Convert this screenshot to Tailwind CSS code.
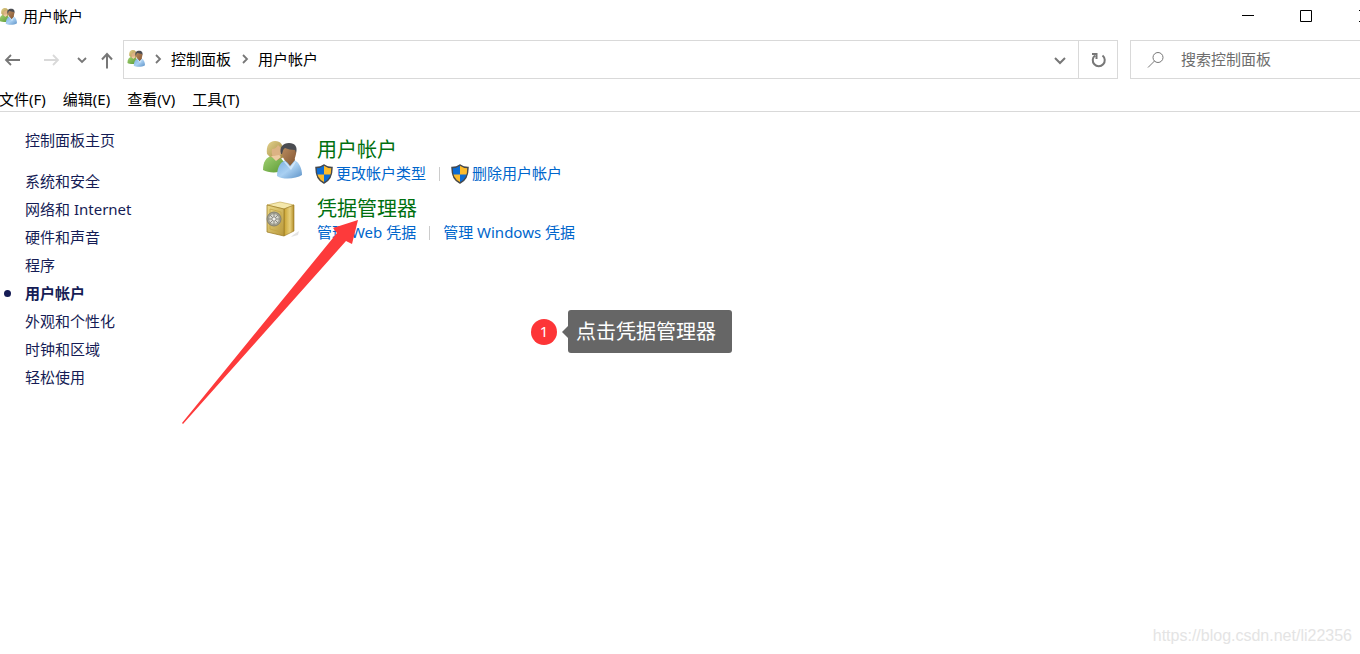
<!DOCTYPE html>
<html lang="zh-CN">
<head>
    <meta charset="utf-8">
    <meta name="viewport" content="width=device-width, initial-scale=1.0">
    <title>用户帐户</title>
    <script src="https://cdn.jsdelivr.net/npm/@tailwindcss/browser@4"></script>
</head>
<body class="relative min-h-screen overflow-x-hidden bg-white font-['Noto_Sans','Noto_Sans_CJK_SC',sans-serif] text-[15px] text-black">

<!-- shared icons -->
<svg class="absolute size-0" aria-hidden="true">
    <defs>
        <linearGradient id="green" x1="0" y1="0" x2="1" y2="1"><stop offset="0" stop-color="#a3d273"/><stop offset="1" stop-color="#5b9a35"/></linearGradient>
        <linearGradient id="blue" x1="0" y1="0" x2="1" y2="1"><stop offset="0" stop-color="#79aee0"/><stop offset=".5" stop-color="#a9d0f2"/><stop offset="1" stop-color="#5c91c6"/></linearGradient>
        <linearGradient id="hair" x1="0" y1="0" x2="1" y2="1"><stop offset="0" stop-color="#e3d28c"/><stop offset="1" stop-color="#9c823c"/></linearGradient>
        <linearGradient id="skin" x1="0" y1="0" x2="1" y2="1"><stop offset="0" stop-color="#bd8f62"/><stop offset="1" stop-color="#865935"/></linearGradient>
        <linearGradient id="gold" x1="0" y1="0" x2="1" y2="1"><stop offset="0" stop-color="#eddb8a"/><stop offset="1" stop-color="#b8973a"/></linearGradient>
        <linearGradient id="side" x1="0" y1="0" x2="1" y2="0"><stop offset="0" stop-color="#c9a22f"/><stop offset=".6" stop-color="#e6cf7c"/><stop offset="1" stop-color="#b38d28"/></linearGradient>
    </defs>
    <symbol id="users" viewBox="0 0 40 40">
        <path d="M1 31C1 23 4 18 10 17l8 1 4 5-1 9C15 34 6 34 1 31z" fill="url(#green)"/>
        <path d="M5 15C4 7 7 2 13 2c6 0 8 4 8 9l1 7-6 3-4-2-4-1z" fill="url(#hair)"/>
        <path d="M10 10c3 0 5-2 6-4 3 2 4 5 3 9-1 3-3 5-5 5-3 0-5-5-4-10z" fill="#dcb284"/>
        <path d="M9 17l5 5 5-4-2-2-5 1z" fill="#edcba2"/>
        <path d="M15 37c0-8 3-14 9-16l8 0c5 2 8 8 8 15-6 4-19 5-25 1z" fill="url(#blue)"/>
        <path d="M23 20l5 7 5-6-1-3-8-1z" fill="#8e6039"/>
        <path d="M20 14c0-5 3-8 8-8 4 0 7 4 6 9-1 5-3 9-6 9-4 0-8-5-8-10z" fill="url(#skin)"/>
        <path d="M19 15c-2-7 2-11 8-11 6 0 9 4 7 10l-1-3c-4 0-7-1-10-2-2 1-2 3-3 6z" fill="#4b4c51"/>
        <path d="M23 22l5 6 5-6 1 1-5 8-7-8z" fill="#cfe5f8"/>
    </symbol>
    <symbol id="safe" viewBox="0 0 40 40">
        <path d="M31 34l6-4-1 4-7 2z" fill="#e3e3e3"/>
        <path d="M5 4l13-3 14 3-10 4z" fill="#f4e8ac" stroke="#c0a248" stroke-width=".6"/>
        <path d="M22 8l10-4v26l-10 5z" fill="url(#side)" stroke="#96741e" stroke-width=".6"/>
        <path d="M5 4l17 4v27L5 31z" fill="url(#gold)" stroke="#9f802b" stroke-width=".8"/>
        <path d="M8 8l11 3v20L8 28z" fill="none" stroke="#c3a548" stroke-width=".8"/>
        <circle cx="12" cy="18" r="7" fill="#a3a293" stroke="#77766d" stroke-width=".8"/>
        <circle cx="12" cy="18" r="4.800" fill="#d9d9d1"/>
        <path d="M12 12v12M6 18h12M8 14l8 8M16 14l-8 8" stroke="#8b8a80"/>
        <circle cx="12" cy="18" r="2" fill="#f1f1ec" stroke="#77766d" stroke-width=".6"/>
    </symbol>
    <symbol id="shield" viewBox="0 0 18 20">
        <path d="M9 1C7 2.600 4 3.500 1 3.500 1 11 2.500 16 9 19c6.500-3 8-8 8-15.500C14 3.500 11 2.600 9 1z" fill="#0c6cd4"/>
        <path d="M9 1v9.500h7.500C17 8 17 6 17 3.500 14 3.500 11 2.600 9 1zM1.500 10.500H9V19c-5-2-7-5-7.500-8.500z" fill="#fdbc2c"/>
        <path d="M9 1C7 2.600 4 3.500 1 3.500 1 11 2.500 16 9 19c6.500-3 8-8 8-15.500C14 3.500 11 2.600 9 1z" fill="none" stroke="#45484d" stroke-width="1.500"/>
    </symbol>
</svg>

<!-- title bar -->
<header class="flex h-8 items-center">
    <svg class="-ml-px size-[18px]"><use href="#users"/></svg>
    <h1 class="ml-1.5 flex-1">用户帐户</h1>
    <button class="flex h-8 w-[58px] items-center justify-center" aria-label="最小化">
        <svg class="size-3" viewBox="0 0 12 12"><path d="M0 5.500h12" stroke="#000"/></svg>
    </button>
    <button class="flex h-8 w-[58px] items-center justify-center" aria-label="最大化">
        <svg class="size-3" viewBox="0 0 12 12"><path d="M.5.5h11v11H.5z" fill="none" stroke="#000"/></svg>
    </button>
    <button class="flex h-8 w-[25px] items-center overflow-hidden pl-6" aria-label="关闭">
        <svg class="size-3 shrink-0" viewBox="0 0 12 12"><path d="M0 0l12 12M12 0L0 12" stroke="#000"/></svg>
    </button>
</header>

<!-- navigation -->
<nav class="flex h-[55px] items-start pt-2">
    <div class="flex h-[39px] w-[123px] shrink-0 items-center text-[#777]">
        <button class="ml-1" aria-label="后退">
            <svg class="size-[18px]" viewBox="0 0 18 18" fill="none" stroke="currentColor" stroke-width="1.800"><path d="M16 9H2M7 4L2 9l5 5"/></svg>
        </button>
        <button class="ml-5 text-[#d9d9d9]" aria-label="前进">
            <svg class="size-[18px]" viewBox="0 0 18 18" fill="none" stroke="currentColor" stroke-width="1.800"><path d="M2 9h14M11 4l5 5-5 5"/></svg>
        </button>
        <button class="ml-4" aria-label="最近浏览的位置">
            <svg class="size-3" viewBox="0 0 12 12" fill="none" stroke="currentColor" stroke-width="1.800"><path d="M2 4l4 4 4-4"/></svg>
        </button>
        <button class="ml-2.5" aria-label="上移">
            <svg class="size-[18px]" viewBox="0 0 18 18" fill="none" stroke="currentColor" stroke-width="2"><path d="M9 17.500V3M4 8.500L9 3l5 5.500"/></svg>
        </button>
    </div>
    <div class="flex h-[39px] flex-1 items-center border border-[#d9d9d9]">
        <svg class="mb-1 ml-[3px] size-[18px]"><use href="#users"/></svg>
        <svg class="ml-[7px] size-3 text-[#777]" viewBox="0 0 12 12" fill="none" stroke="currentColor" stroke-width="1.800"><path d="M4 1l4 4-4 4"/></svg>
        <a href="#" class="ml-[7px]">控制面板</a>
        <svg class="ml-2 size-3 text-[#777]" viewBox="0 0 12 12" fill="none" stroke="currentColor" stroke-width="1.800"><path d="M4 1l4 4-4 4"/></svg>
        <a href="#" class="ml-[7px] flex-1">用户帐户</a>
        <button class="flex h-full w-9 items-center justify-center text-[#777]" aria-label="以前的位置">
            <svg class="size-3" viewBox="0 0 12 12" fill="none" stroke="currentColor" stroke-width="2"><path d="M1 4l5 5 5-5"/></svg>
        </button>
        <button class="flex h-full w-[39px] items-center justify-center border-l border-[#d9d9d9] text-[#777]" aria-label="刷新">
            <svg class="size-4" viewBox="0 0 16 16" fill="none" stroke="currentColor" stroke-width="2"><path d="M5 3.500A6 6 0 1 0 12.500 3.500M2 2h4.500v5"/></svg>
        </button>
    </div>
    <label class="ml-3 flex h-[39px] w-[230px] items-center border border-r-0 border-[#d9d9d9] pl-4">
        <svg class="size-[18px] shrink-0 text-[#777]" viewBox="0 0 18 18" fill="none" stroke="currentColor"><circle cx="11" cy="6.500" r="5"/><path d="M7.500 10L1 16.500"/></svg>
        <input type="text" class="ml-4 min-w-0 flex-1 placeholder:text-[#6d6d6d] outline-none" placeholder="搜索控制面板" aria-label="搜索控制面板">
    </label>
</nav>

<!-- menu -->
<div class="flex h-[25px] items-center gap-[17px] border-b border-[#d9d9d9]">
    <button class="-ml-px">文件(F)</button>
    <button>编辑(E)</button>
    <button>查看(V)</button>
    <button>工具(T)</button>
</div>

<div class="flex">
    <aside class="w-[262px] shrink-0 pt-3.5 pl-[25px] leading-7 text-[#151c55]">
        <a href="#" class="block">控制面板主页</a>
        <ul class="mt-[13px]">
            <li><a href="#">系统和安全</a></li>
            <li><a href="#">网络和 Internet</a></li>
            <li><a href="#">硬件和声音</a></li>
            <li><a href="#">程序</a></li>
            <li class="-ml-[21px] flex items-center gap-3.5 font-bold"><span class="size-[7px] rounded-full bg-[#151c55]"></span><a href="#">用户帐户</a></li>
            <li><a href="#">外观和个性化</a></li>
            <li><a href="#">时钟和区域</a></li>
            <li><a href="#">轻松使用</a></li>
        </ul>
    </aside>

    <main class="flex flex-1 flex-col gap-3 pt-[26px] leading-[23px] text-[#0066cc]">
        <section class="flex gap-[15px]">
            <svg class="mt-px size-10 shrink-0"><use href="#users"/></svg>
            <div>
                <h2 class="text-xl leading-6 text-[#00700f]"><a href="#">用户帐户</a></h2>
                <div class="flex items-center">
                    <svg class="mr-[3px] -ml-0.5 h-5 w-[18px]"><use href="#shield"/></svg>
                    <a href="#">更改帐户类型</a>
                    <span class="mx-[13px] h-3.5 w-px bg-[#ccc]"></span>
                    <svg class="mr-[3px] -ml-0.5 h-5 w-[18px]"><use href="#shield"/></svg>
                    <a href="#">删除用户帐户</a>
                </div>
            </div>
        </section>
        <section class="flex gap-[15px]">
            <svg class="mt-1 size-10 shrink-0"><use href="#safe"/></svg>
            <div>
                <h2 class="text-xl leading-6 text-[#00700f]"><a href="#">凭据管理器</a></h2>
                <div class="flex items-center">
                    <a href="#">管理 Web 凭据</a>
                    <span class="mx-[13px] h-3.5 w-px bg-[#ccc]"></span>
                    <a href="#">管理 Windows 凭据</a>
                </div>
            </div>
        </section>
    </main>
</div>

<!-- annotations -->
<svg class="pointer-events-none absolute top-[218px] left-[180px] h-[208px] w-[180px]" viewBox="0 0 180 208"><path d="M178 2l-6 24-6-3L3 206l-1-1L157 15l-4-5z" fill="#fd3a3b"/></svg>
<div class="absolute top-[310px] left-[531px] flex items-center text-white">
    <span class="flex size-[26px] items-center justify-center rounded-full bg-[#fd3537]">1</span>
    <svg class="ml-[5px] h-3 w-1.5" viewBox="0 0 6 12"><path d="M6 0v12L0 6z" fill="#666"/></svg>
    <span class="rounded-[3px] bg-[#666] py-2 pr-4 pl-2 text-xl leading-[27px]">点击凭据管理器</span>
</div>

<div class="absolute right-2 bottom-1.5 font-['Liberation_Sans',sans-serif] text-base text-[#e4e4e4]">https://blog.csdn.net/li22356</div>
</body>
</html>
